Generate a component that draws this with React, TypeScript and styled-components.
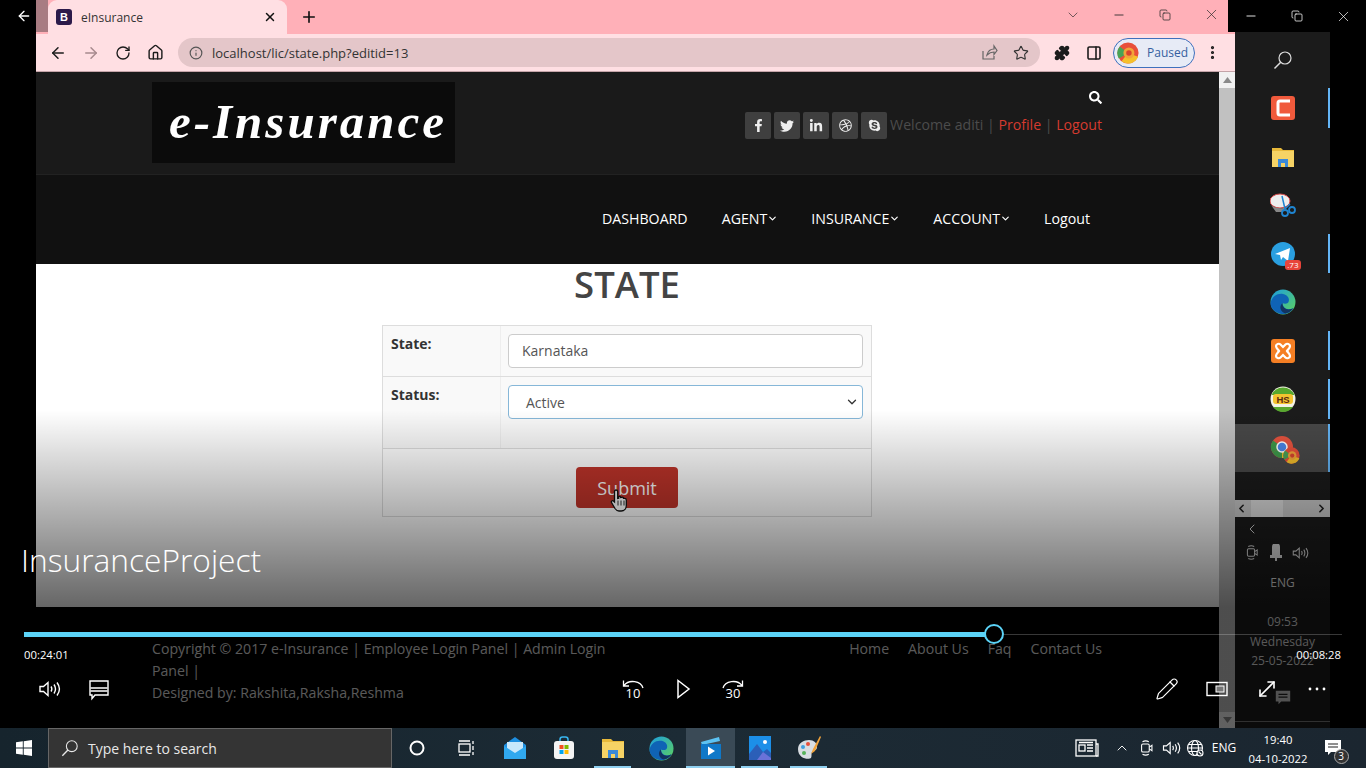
import React from 'react'
import styled, { createGlobalStyle } from 'styled-components'
import {
  ArrowLeft,
  ArrowRight,
  ChevronDown,
  ChevronLeft,
  ChevronRight,
  ChevronUp,
  Copy,
  House,
  Info,
  Minus,
  MoreVertical,
  MoveDiagonal,
  PanelRight,
  Pencil,
  Plus,
  Puzzle,
  RotateCw,
  Star,
  X
} from 'lucide-react'
import { FaDribbble, FaFacebookF, FaLinkedinIn, FaSearch, FaSkype, FaTwitter } from 'react-icons/fa'

const GlobalStyle = createGlobalStyle`
  html, body {
    margin: 0;
    background: #000;
    overflow: hidden;
  }
  * {
    box-sizing: border-box;
  }
  svg {
    flex: none;
    display: block;
  }
`

const Screen = styled.div`
  width: 1366px;
  height: 768px;
  display: flex;
  flex-direction: column;
  font-family: 'Open Sans', 'Liberation Sans', sans-serif;
  overflow: hidden;
`

const Desktop = styled.div`
  position: relative;
  height: 728px;
  display: grid;
  grid-template-columns: 36px 1199px 131px;
  background: #000;
`

const LeftStrip = styled.div`
  background: #000;
  color: #fff;
  padding: 8px 0 0 16px;
`

const Browser = styled.div`
  display: flex;
  flex-direction: column;
  min-width: 0;
`

const TitleBar = styled.div`
  height: 34px;
  display: flex;
  align-items: flex-start;
  background: #ffb0b8;
`

const TabEdge = styled.div`
  width: 12px;
  height: 32px;
  background: #a87c82;
`

const Tab = styled.div`
  width: 239px;
  height: 34px;
  display: flex;
  align-items: center;
  padding: 0 10px 0 8px;
  background: #ffdfe3;
  border-radius: 9px 9px 0 0;
  color: #333;
  font-size: 12px;
`

const Favicon = styled.div`
  width: 16px;
  height: 16px;
  margin-right: 9px;
  border-radius: 3px;
  background: #2c1a4a;
  color: #fff;
  font: bold 11px/16px 'Liberation Sans', sans-serif;
  text-align: center;
`

const TabTitle = styled.span`
  flex: 1;
`

const NewTab = styled.div`
  width: 44px;
  height: 34px;
  display: flex;
  align-items: center;
  justify-content: center;
  color: #111;
`

const WindowButtons = styled.div`
  margin-left: auto;
  margin-right: 1px;
  display: flex;
  height: 29px;
  align-items: center;
  color: #2a2a2a;
`

const WindowButton = styled.div`
  width: 46px;
  display: flex;
  justify-content: center;
`

const Toolbar = styled.div`
  height: 38px;
  display: flex;
  align-items: center;
  padding-left: 6px;
  background: #ffdfe3;
  border-bottom: 1px solid #c4a4a8;
`

const NavButton = styled.div<{ $muted?: boolean }>`
  width: 32.5px;
  display: flex;
  justify-content: center;
  color: ${(p) => (p.$muted ? '#a78a8e' : '#1c1c1c')};
`

const Omnibox = styled.div`
  width: 862px;
  height: 29px;
  margin-left: 6px;
  display: flex;
  align-items: center;
  padding: 0 3px 0 11px;
  background: #e4c6c9;
  border-radius: 15px;
  color: #333;
  font-size: 13px;
`

const Url = styled.span`
  margin-left: 9px;
  flex: 1;
`

const OmniIcon = styled.div`
  width: 32px;
  display: flex;
  justify-content: center;
  color: #555;
`

const ExtensionGroup = styled.div`
  display: flex;
  align-items: center;
  margin-left: 6px;
`

const ExtensionButton = styled.div`
  width: 32px;
  display: flex;
  justify-content: center;
  color: #1c1c1c;
`

const ProfilePill = styled.div`
  width: 82px;
  height: 30px;
  margin: 0 1px 0 3px;
  display: flex;
  align-items: center;
  gap: 8px;
  padding-left: 3px;
  border: 1.5px solid #3f70bd;
  border-radius: 15px;
  background: #e7ebf6;
  color: #36609f;
  font-size: 12px;
`

const PageRow = styled.div`
  flex: 1;
  display: flex;
  min-height: 0;
`

const Page = styled.div`
  width: 1183px;
  display: flex;
  flex-direction: column;
  background: #000;
`

const Scrollbar = styled.div`
  width: 16px;
  display: flex;
  flex-direction: column;
  align-items: center;
  background: #f1f1f1;
  color: #8a8a8a;
`

const ScrollArrow = styled.div`
  height: 16px;
  display: flex;
  align-items: center;
  justify-content: center;
`

const ScrollThumb = styled.div`
  flex: 1;
  width: 100%;
  background: #c1c1c1;
`

const HeaderBand = styled.header`
  height: 103px;
  display: flex;
  justify-content: space-between;
  padding: 10px 117px 0 116px;
  background: #1a1a1a;
  border-bottom: 1px solid #222;
`

const Logo = styled.div`
  width: 303px;
  height: 81px;
  display: flex;
  align-items: center;
  justify-content: flex-end;
  padding: 0 8px 2px 0;
  background: #0b0b0b;
  color: #fff;
  font: italic bold 49px/1 'Liberation Serif', serif;
  letter-spacing: 3px;
`

const HeaderRight = styled.div`
  display: flex;
  flex-direction: column;
  align-items: flex-end;
  padding-top: 9px;
  gap: 8px;
  color: #fff;
`

const WelcomeRow = styled.div`
  display: flex;
  align-items: center;
  gap: 3px;
  font-size: 14.15px;
  color: #4c4c4c;
`

const SocialButton = styled.a`
  width: 26px;
  height: 27px;
  display: flex;
  align-items: center;
  justify-content: center;
  border-radius: 2px;
  background: #3f3f3f;
  color: #eee;
`

const WelcomeText = styled.span`
  padding-bottom: 2px;
  white-space: pre;
`

const RedLink = styled.span`
  color: #d63a2f;
`

const NavBand = styled.nav`
  height: 89px;
  display: flex;
  justify-content: flex-end;
  align-items: center;
  gap: 33px;
  padding: 0 129px 2px 0;
  background: #111;
  color: #fff;
  font-size: 14.2px;
`

const NavItem = styled.span<{ $wide?: boolean }>`
  display: flex;
  align-items: center;
  margin-right: ${(p) => (p.$wide ? '1px' : '0')};
`

const Content = styled.main`
  height: 343px;
  display: flex;
  flex-direction: column;
  align-items: center;
  padding-right: 1px;
  background: #fff;
`

const Heading = styled.h1`
  margin: 0;
  height: 61px;
  font-size: 36.5px;
  line-height: 40px;
  font-weight: 600;
  color: #444;
`

const FormTable = styled.div`
  width: 490px;
  height: 192px;
  display: grid;
  grid-template-rows: 51px 72px 1fr;
  border: 1px solid #ddd;
  color: #333;
  font-size: 14px;
`

const FormRow = styled.div`
  display: grid;
  grid-template-columns: 118px 1fr;
  border-bottom: 1px solid #ddd;
`

const LabelCell = styled.div`
  padding: 8px 8px;
  background: #f9f9f9;
  border-right: 1px solid #eee;
  font-weight: 700;
  line-height: 20px;
`

const FieldCell = styled.div`
  padding: 8px 8px 0 7px;
  background: #f9f9f9;
`

const Field = styled.div<{ $focus?: boolean }>`
  height: 34px;
  display: flex;
  align-items: center;
  justify-content: space-between;
  padding: 0 3px ${(p) => (p.$focus ? '0' : '2px')} ${(p) => (p.$focus ? '17px' : '13px')};
  background: #fff;
  border: 1px solid ${(p) => (p.$focus ? '#86b7d8' : '#ccc')};
  border-radius: 4px;
  color: #555;
`

const SubmitRow = styled.div`
  position: relative;
  display: flex;
  justify-content: center;
  padding-top: 18px;
`

const SubmitButton = styled.button`
  width: 102px;
  height: 41px;
  border: 0;
  border-radius: 4px;
  background: #c0342a;
  color: #fff;
  font: 18px 'Open Sans', sans-serif;
`

const HandCursor = styled.svg`
  position: absolute;
  left: 227px;
  top: 39px;
`

const Footer = styled.footer`
  flex: 1;
  display: flex;
  justify-content: space-between;
  padding: 31px 117px 0 116px;
  background: #000;
  color: #dedede;
  font-size: 14.15px;
  line-height: 22px;
`

const FooterLeft = styled.div`
  width: 470px;
`

const FooterLinks = styled.div`
  display: flex;
  gap: 19px;
`

const RightColumn = styled.div`
  display: flex;
  flex-direction: column;
`

const OuterButtons = styled.div`
  height: 32px;
  margin-left: -7px;
  display: flex;
  color: #fff;
  background: #000;
`

const OuterButton = styled.div`
  width: 46px;
  flex: none;
  height: 32px;
  display: flex;
  align-items: center;
  justify-content: center;
`

const SidePanel = styled.aside`
  flex: 1;
  width: 95px;
  display: flex;
  flex-direction: column;
  align-items: center;
  padding-top: 3.5px;
  background: #1b1b1b;
  color: #ddd;
`

const AppRow = styled.div<{ $open?: boolean; $active?: boolean }>`
  position: relative;
  width: 100%;
  height: 48.5px;
  flex: none;
  display: flex;
  align-items: center;
  justify-content: center;
  background: ${(p) => (p.$active ? '#484848' : 'transparent')};

  &::after {
    content: '';
    display: ${(p) => (p.$open ? 'block' : 'none')};
    position: absolute;
    right: 0;
    top: ${(p) => (p.$active ? '0' : '4px')};
    bottom: ${(p) => (p.$active ? '0' : '5px')};
    width: 2px;
    background: #64b5f6;
  }
`

const AppIcon = styled.div`
  position: relative;
  width: 26px;
  height: 26px;
`

const CountBadge = styled.span`
  position: absolute;
  right: -5px;
  bottom: -3px;
  padding: 0 2px;
  border-radius: 3px;
  background: #e8443a;
  color: #fff;
  font-size: 8px;
  line-height: 10px;
`

const ProfileOverlay = styled.div`
  position: absolute;
  right: -4px;
  bottom: -3px;
`

const HScroll = styled.div`
  width: 100%;
  height: 17px;
  margin-top: 27.5px;
  display: flex;
  align-items: center;
  justify-content: space-between;
  padding-right: 2px;
  background: #c8c8c8;
  color: #222;
`

const HThumb = styled.div`
  width: 32px;
  height: 100%;
  margin-right: 30px;
  background: #dcdcdc;
`

const TrayBack = styled.div`
  width: 100%;
  margin-top: 4px;
  padding-left: 9px;
  color: #fff;
`

const TrayIcons = styled.div`
  margin: 7px 12px 0 0;
  display: flex;
  align-items: center;
  gap: 8px;
  color: #ddd;
`

const TrayText = styled.div<{ $top: number; $size?: number }>`
  margin-top: ${(p) => p.$top}px;
  font-size: ${(p) => p.$size ?? 12}px;
  line-height: 16px;
  white-space: nowrap;
  color: #ddd;
`

const NotifyGlyph = styled.div`
  margin-top: 20px;
  color: #ccc;
`

const PanelRule = styled.div`
  width: 100%;
  height: 1px;
  margin-top: 14px;
  background: #777;
`

const Dimmer = styled.div`
  position: absolute;
  inset: 0;
  pointer-events: none;
  background: linear-gradient(to bottom, transparent 410px, rgba(0, 0, 0, 0.6) 607px);
`

const VideoTitle = styled.div`
  position: absolute;
  left: 21px;
  top: 537px;
  color: #fff;
  font-size: 31.7px;
  font-weight: 300;
  line-height: 46px;
`

const Player = styled.div`
  position: absolute;
  left: 24px;
  right: 24px;
  top: 623px;
  color: #fff;
`

const Track = styled.div`
  height: 22px;
  display: flex;
  align-items: center;
`

const TrackFill = styled.div`
  height: 5px;
  background: #5bd3f7;
`

const TrackKnob = styled.div`
  width: 20px;
  height: 20px;
  flex: none;
  margin-left: -1px;
  border: 2px solid #5bd3f7;
  border-radius: 50%;
  background: #000;
`

const TrackRest = styled.div`
  flex: 1;
  height: 1px;
  background: rgba(255, 255, 255, 0.22);
`

const TimeRow = styled.div`
  height: 16px;
  margin-top: 2px;
  display: flex;
  justify-content: space-between;
  padding-right: 1px;
  font-size: 11.3px;
  line-height: 16px;
`

const ControlRow = styled.div`
  height: 40px;
  margin-top: 6px;
  display: flex;
  align-items: center;
`

const ControlSide = styled.div<{ $end?: boolean }>`
  flex: 1 1 0;
  display: flex;
  align-items: center;
  justify-content: ${(p) => (p.$end ? 'flex-end' : 'flex-start')};
  gap: 26px;
  padding: 0 13px;
`

const ControlCenter = styled.div`
  display: flex;
  align-items: center;
  gap: 26px;
`

const SeekLabel = styled.text`
  font: 13px 'Open Sans', sans-serif;
  fill: #fff;
`

const Taskbar = styled.div`
  height: 40px;
  display: flex;
  align-items: stretch;
  background: linear-gradient(to right, #16242d, #1c2b35 50%, #1b2630);
  color: #fff;
`

const StartButton = styled.div`
  width: 48px;
  display: flex;
  align-items: center;
  justify-content: center;
`

const SearchBox = styled.div`
  width: 344px;
  display: flex;
  align-items: center;
  gap: 9px;
  padding-left: 12px;
  background: #343434;
  border: 1px solid #666;
  font-size: 14px;
  color: #e8e8e8;
`

const TaskItem = styled.div<{ $active?: boolean; $running?: boolean }>`
  position: relative;
  width: 49px;
  display: flex;
  align-items: center;
  justify-content: center;
  background: ${(p) => (p.$active ? '#3a4a56' : 'transparent')};

  &::after {
    content: '';
    display: ${(p) => (p.$running ? 'block' : 'none')};
    position: absolute;
    left: ${(p) => (p.$active ? '0' : '6px')};
    right: ${(p) => (p.$active ? '0' : '6px')};
    bottom: 0;
    height: 2px;
    background: #8fd0f0;
  }
`

const Tray = styled.div`
  margin-left: auto;
  display: flex;
  align-items: center;
  padding-right: 12px;
`

const TrayCell = styled.div<{ $w: number }>`
  width: ${(p) => p.$w}px;
  display: flex;
  flex-direction: column;
  align-items: center;
  justify-content: center;
  font-size: 12px;
  line-height: 20px;
  white-space: nowrap;
`

const ClockCell = styled(TrayCell)`
  padding-top: 2px;
  font-size: 11.3px;
  line-height: 19px;
`

const NotifyWrap = styled.div`
  position: relative;
`

const NotifyCount = styled.span`
  position: absolute;
  right: -6px;
  bottom: -6px;
  width: 15px;
  height: 15px;
  border: 1px solid #aaa;
  border-radius: 50%;
  background: #333;
  font-size: 10px;
  line-height: 13px;
  text-align: center;
`

const ChromeMark = ({ size = 24 }: { size?: number }) => (
  <svg width={size} height={size} viewBox="0 0 24 24">
    <circle cx="12" cy="12" r="11" fill="#e8543f" />
    <path d="M12 12 2.5 17.5A11 11 0 0 1 3 5.5Z" fill="#3d9a4b" />
    <path d="M12 12 12 23A11 11 0 0 1 2.5 17.5Z" fill="#3d9a4b" />
    <path d="M12 12 21.5 17.5A11 11 0 0 1 12 23Z" fill="#f2c230" />
    <circle cx="12" cy="12" r="5" fill="#4a86e8" stroke="#fff" strokeWidth="1.5" />
  </svg>
)

const ProfileMark = ({ size = 22 }: { size?: number }) => (
  <svg width={size} height={size} viewBox="0 0 24 24">
    <circle cx="12" cy="12" r="11.5" fill="#e84f3a" />
    <path d="M12 12 2 18A11.5 11.5 0 0 1 3 5Z" fill="#49a357" />
    <path d="M12 12 23 16A11.5 11.5 0 0 1 5 21Z" fill="#f5c02c" />
    <circle cx="13" cy="12" r="6" fill="#f2a33a" />
    <circle cx="13" cy="12" r="3" fill="#d9442f" />
  </svg>
)

const EdgeMark = ({ size = 26 }: { size?: number }) => (
  <svg width={size} height={size} viewBox="0 0 26 26">
    <defs>
      <linearGradient id="edgeTop" x1="0" y1="0" x2="1" y2="1">
        <stop offset="0" stopColor="#1b9de2" />
        <stop offset="1" stopColor="#5fd35a" />
      </linearGradient>
    </defs>
    <circle cx="13" cy="13" r="12.5" fill="url(#edgeTop)" />
    <path d="M.6 14C2 7 8 4 13 5c5 1 7 5 5.5 8-1 2-4 2-6 1 0 5 5 8 11 5-3 5-8 6.500-12 6C5 24 .3 19 .6 14Z" fill="#0f63b5" />
    <path d="M12.500 14c-.5 5 5 8.500 11 5-2 3-5 5-8 5.500-5-1.500-7-7-3-10.500Z" fill="#12335f" />
  </svg>
)

const FolderMark = ({ size = 24 }: { size?: number }) => (
  <svg width={size} height={size} viewBox="0 0 24 24">
    <path d="M1 3h9l2 2h11v17H1Z" fill="#e8b93a" />
    <rect x="1" y="6" width="22" height="16" fill="#f6d365" />
    <path d="M7 22v-8h10v8h-3v-4h-4v4Z" fill="#3b8ad9" />
  </svg>
)

const SnipMark = () => (
  <svg width="26" height="26" viewBox="0 0 26 26">
    <ellipse cx="10" cy="9" rx="10" ry="7" fill="#eee" stroke="#d94a4a" strokeWidth="1" />
    <path d="M1 13c4 4 12 4 15 2l-4 5H6Z" fill="#888" />
    <path d="M12 4l3 13M15 17l5-5" stroke="#1f84d0" strokeWidth="1.500" fill="none" />
    <circle cx="15" cy="21" r="3" fill="none" stroke="#1f84d0" strokeWidth="1.800" />
    <circle cx="22" cy="18" r="3" fill="none" stroke="#1f84d0" strokeWidth="1.800" />
  </svg>
)

const XamppMark = () => (
  <svg width="26" height="26" viewBox="0 0 26 26">
    <rect x="1" y="1" width="24" height="24" rx="3" fill="#f57f24" />
    <path
      d="M6 8c0-2 3-3 4.500-1.500L13 9l2.500-2.500C17 5 20 6 20 8c0 2-1.500 3-3 5 1.500 2 3 3 3 5 0 2-3 3-4.500 1.500L13 17l-2.500 2.500C9 21 6 20 6 18c0-2 1.500-3 3-5-1.500-2-3-3-3-5Z"
      fill="none"
      stroke="#fff"
      strokeWidth="2.200"
    />
  </svg>
)

const HeidiMark = () => (
  <svg width="26" height="26" viewBox="0 0 26 26">
    <circle cx="13" cy="13" r="12.500" fill="#f2f2e4" />
    <path d="M1.500 9A12.500 12.500 0 0 1 24.500 9Z" fill="#58a82e" />
    <path d="M3 21a12.500 12.500 0 0 0 20 0Z" fill="#58a82e" />
    <rect x="3" y="8" width="20" height="10" rx="3" fill="#f4c430" />
    <text x="13" y="16.500" textAnchor="middle" fontFamily="Liberation Sans" fontWeight="700" fontSize="9.500" fill="#5a2a10">
      HS
    </text>
  </svg>
)

const LensGlyph = ({ size = 20 }: { size?: number }) => (
  <svg width={size} height={size} viewBox="0 0 20 20" fill="none" stroke="currentColor" strokeWidth="1.200">
    <circle cx="12" cy="8" r="6" />
    <path d="M7.700 12.300 1.500 18.500" strokeWidth="1.500" />
  </svg>
)

const SpeakerGlyph = ({ size = 24 }: { size?: number }) => (
  <svg width={size} height={size} viewBox="0 0 24 24" fill="none" stroke="currentColor" strokeWidth="1.400">
    <path d="M3 9.500h3.500L11 5.500v13l-4.500-4H3Z" />
    <path d="M14 9.500c1 1.500 1 3.500 0 5M17 7.500c2 3 2 6 0 9M20 5.500c3 4 3 9 0 13" />
  </svg>
)

const MeetGlyph = ({ size = 20 }: { size?: number }) => (
  <svg width={size} height={size} viewBox="0 0 20 20" fill="none" stroke="currentColor" strokeWidth="1.200">
    <rect x="4" y="5.500" width="8.500" height="9" rx="1.500" />
    <path d="M12.500 9l3-2v6l-3-2M5 3c2-1 5-1 7 0M5 17c2 1 5 1 7 0" />
  </svg>
)

const SeekGlyph = ({ label, mirror }: { label: string; mirror?: boolean }) => (
  <svg width="24" height="30" viewBox="0 -3 24 30" fill="none">
    <path
      d={mirror ? 'M2 11C4 4 16 2 21 8.500M21.500 3.500V9H16' : 'M22 11C20 4 8 2 3 8.500M2.500 3.500V9H8'}
      stroke="#fff"
      strokeWidth="1.300"
    />
    <SeekLabel x="12" y="21" textAnchor="middle">
      {label}
    </SeekLabel>
  </svg>
)

const CaptionGlyph = () => (
  <svg width="24" height="24" viewBox="0 0 24 24" fill="none" stroke="#fff" strokeWidth="1.400">
    <path d="M3 4h18v14H8l-3 3.500V18H3Z" />
    <path d="M3.500 11h17M3.500 14h17" />
  </svg>
)

const PlayGlyph = () => (
  <svg width="24" height="24" viewBox="0 0 24 24" fill="none" stroke="#fff" strokeWidth="1.500">
    <path d="M7 3.500 18 12 7 20.500Z" />
  </svg>
)

const MiniGlyph = () => (
  <svg width="24" height="24" viewBox="0 0 24 24" fill="none" stroke="#fff" strokeWidth="1.400">
    <rect x="2" y="5.500" width="20" height="13" />
    <rect x="11" y="9" width="8" height="6" fill="#777" strokeWidth="1" />
  </svg>
)

const NotesGlyph = ({ size = 20 }: { size?: number }) => (
  <svg width={size} height={size} viewBox="0 0 20 20" fill="currentColor">
    <path d="M2 2h16v12H8l-3 3v-3H2Z" />
    <path d="M5 6h10M5 9h10" stroke="#222" strokeWidth="1.200" />
  </svg>
)

const StartGlyph = () => (
  <svg width="16" height="16" viewBox="0 0 16 16" fill="#fff">
    <path d="M0 2.300 6.800 1.300V7.500H0ZM7.700 1.200 16 0V7.500H7.700ZM0 8.400H6.800V14.700L0 13.700ZM7.700 8.400H16V16L7.700 14.800Z" />
  </svg>
)

const TaskViewGlyph = () => (
  <svg width="20" height="20" viewBox="0 0 20 20" fill="none" stroke="#fff" strokeWidth="1.300">
    <rect x="3" y="6" width="11" height="8" />
    <path d="M3 3h11M3 17h11M17 3v3M17 8v4M17 14v3" />
  </svg>
)

const MailGlyph = () => (
  <svg width="24" height="24" viewBox="0 0 24 24">
    <path d="M12 1 23 9v14H1V9Z" fill="#1f8fe0" />
    <path d="M4 6h16v8l-8 4-8-4Z" fill="#c9e8fb" />
    <path d="M1 10l11 7 11-7v13H1Z" fill="#30a8ef" />
  </svg>
)

const StoreGlyph = () => (
  <svg width="24" height="24" viewBox="0 0 24 24">
    <path d="M8 6V3.500C8 2 9 1 10.500 1h3C15 1 16 2 16 3.500V6" fill="none" stroke="#38b6f0" strokeWidth="1.500" />
    <rect x="2" y="5" width="20" height="18" rx="3" fill="#f4f4f4" />
    <rect x="7.500" y="9" width="4" height="4" fill="#f25022" />
    <rect x="12.500" y="9" width="4" height="4" fill="#7fba00" />
    <rect x="7.500" y="14" width="4" height="4" fill="#00a4ef" />
    <rect x="12.500" y="14" width="4" height="4" fill="#ffb900" />
  </svg>
)

const VideoGlyph = () => (
  <svg width="24" height="24" viewBox="0 0 24 24">
    <path d="M2 6 20 1l1 4L3 9Z" fill="#5cc2f2" />
    <rect x="2" y="8" width="20" height="15" fill="#0f78c8" />
    <path d="M9 10.500v9l7-4.500Z" fill="#fff" />
  </svg>
)

const PhotosGlyph = () => (
  <svg width="24" height="26" viewBox="0 0 24 26">
    <rect x="1" y="1" width="22" height="24" fill="#1c8fe8" />
    <circle cx="17" cy="7" r="2" fill="#fff" />
    <path d="M1 19 9 9l6 8 4-3 4 4v7H1Z" fill="#2b5fb8" />
    <path d="M9 25 15 17l8 6v2Z" fill="#6a72d8" />
  </svg>
)

const PaletteGlyph = () => (
  <svg width="26" height="26" viewBox="0 0 26 26">
    <path d="M2 14C2 8 8 5 13 5c5 0 8 3 8 7s-4 3-5 5 0 4-1 6c-2 2-13 1-13-9Z" fill="#d8dde2" />
    <circle cx="7" cy="12" r="2" fill="#3fa0e0" />
    <circle cx="12" cy="9" r="2" fill="#e84f3a" />
    <circle cx="8" cy="18" r="2" fill="#56b35a" />
    <path d="M24 1l-7 13-2 5 4-3 6-14Z" fill="#f2a33a" />
  </svg>
)

const NewsGlyph = () => (
  <svg width="24" height="20" viewBox="0 0 24 20" fill="none" stroke="#fff" strokeWidth="1.300">
    <rect x="1" y="2" width="20" height="16" />
    <rect x="4" y="7" width="6" height="6" />
    <path d="M12 7h6M12 10h6M12 13h6M4 4.500h14M21 6h2v12h-2" />
  </svg>
)

const GlobeGlyph = () => (
  <svg width="18" height="18" viewBox="0 0 18 18" fill="none" stroke="#fff" strokeWidth="1.100">
    <circle cx="9" cy="9" r="7.500" />
    <ellipse cx="9" cy="9" rx="3.500" ry="7.500" />
    <path d="M1.500 9h15M2.500 5.500h13M2.500 12.500h13" />
    <circle cx="14" cy="14" r="3" fill="#1b2630" />
    <path d="M12.500 12.500l3 3" />
  </svg>
)

const HandGlyph = () => (
  <HandCursor width="20" height="25" viewBox="0 0 20 24">
    <path
      d="M6 1.500c1 0 1.700.7 1.700 1.700V10l1-.2V8c1-.5 2 0 2 1l1-.2c1-.3 1.800.2 1.800 1l1 0c1 0 1.800.6 1.800 1.800V17c0 3-2 5.500-5 5.500H9c-2 0-3-1-4-2.500L1.500 14c-.7-1.200 1-2.500 2-1.500l1 1V3.200C4.500 2.200 5 1.500 6 1.500Z"
      fill="#fff"
      stroke="#111"
      strokeWidth="1.300"
    />
    <path d="M8 12v5M11 12v5M14 12v5" stroke="#111" strokeWidth=".9" />
  </HandCursor>
)

const TriangleUp = () => (
  <svg width="9" height="6" viewBox="0 0 9 6" fill="currentColor">
    <path d="M4.500 0 9 6H0Z" />
  </svg>
)

const TriangleDown = () => (
  <svg width="9" height="6" viewBox="0 0 9 6" fill="currentColor">
    <path d="M4.500 6 9 0H0Z" />
  </svg>
)

export default function App() {
  return (
    <>
      <GlobalStyle />
      <Screen>
        <Desktop>
          <LeftStrip>
            <ArrowLeft size={16} />
          </LeftStrip>

          <Browser>
            <TitleBar>
              <TabEdge />
              <Tab>
                <Favicon>B</Favicon>
                <TabTitle>eInsurance</TabTitle>
                <X size={14} strokeWidth={2.5} color="#111" />
              </Tab>
              <NewTab>
                <Plus size={18} strokeWidth={2.2} />
              </NewTab>
              <WindowButtons>
                <WindowButton>
                  <ChevronDown size={16} strokeWidth={1} />
                </WindowButton>
                <WindowButton>
                  <Minus size={14} strokeWidth={1.5} />
                </WindowButton>
                <WindowButton>
                  <Copy size={12} strokeWidth={1.5} />
                </WindowButton>
                <WindowButton>
                  <X size={17} strokeWidth={1} />
                </WindowButton>
              </WindowButtons>
            </TitleBar>

            <Toolbar>
              <NavButton>
                <ArrowLeft size={18} strokeWidth={2} />
              </NavButton>
              <NavButton $muted>
                <ArrowRight size={18} strokeWidth={2} />
              </NavButton>
              <NavButton>
                <RotateCw size={16} strokeWidth={2} />
              </NavButton>
              <NavButton>
                <House size={17} strokeWidth={2} />
              </NavButton>
              <Omnibox>
                <Info size={14} color="#555" />
                <Url>localhost/lic/state.php?editid=13</Url>
                <OmniIcon>
                  <svg width="17" height="17" viewBox="0 0 17 17" fill="none" stroke="#666" strokeWidth="1.200">
                    <path d="M2 7v8h11v-3M6 11c1-4 4-6 7-6V2l3 4.500-3 4V8c-3 0-5 1-7 3Z" />
                  </svg>
                </OmniIcon>
                <OmniIcon>
                  <Star size={16} strokeWidth={1.7} color="#333" />
                </OmniIcon>
              </Omnibox>
              <ExtensionGroup>
                <ExtensionButton>
                  <Puzzle size={16} fill="#1c1c1c" />
                </ExtensionButton>
                <ExtensionButton>
                  <PanelRight size={16} strokeWidth={2.4} />
                </ExtensionButton>
                <ProfilePill>
                  <ProfileMark />
                  Paused
                </ProfilePill>
                <ExtensionButton>
                  <MoreVertical size={17} strokeWidth={2.5} />
                </ExtensionButton>
              </ExtensionGroup>
            </Toolbar>

            <PageRow>
              <Page>
                <HeaderBand>
                  <Logo>e-Insurance</Logo>
                  <HeaderRight>
                    <FaSearch size={13} />
                    <WelcomeRow>
                      <SocialButton>
                        <FaFacebookF size={13} />
                      </SocialButton>
                      <SocialButton>
                        <FaTwitter size={14} />
                      </SocialButton>
                      <SocialButton>
                        <FaLinkedinIn size={14} />
                      </SocialButton>
                      <SocialButton>
                        <FaDribbble size={13} />
                      </SocialButton>
                      <SocialButton>
                        <FaSkype size={13} />
                      </SocialButton>
                      <WelcomeText>
                        Welcome aditi | <RedLink>Profile</RedLink> | <RedLink>Logout</RedLink>
                      </WelcomeText>
                    </WelcomeRow>
                  </HeaderRight>
                </HeaderBand>

                <NavBand>
                  <NavItem $wide>DASHBOARD</NavItem>
                  <NavItem>
                    AGENT
                    <ChevronDown size={11} strokeWidth={2.6} />
                  </NavItem>
                  <NavItem>
                    INSURANCE
                    <ChevronDown size={11} strokeWidth={2.6} />
                  </NavItem>
                  <NavItem>
                    ACCOUNT
                    <ChevronDown size={11} strokeWidth={2.6} />
                  </NavItem>
                  <NavItem>Logout</NavItem>
                </NavBand>

                <Content>
                  <Heading>STATE</Heading>
                  <FormTable>
                    <FormRow>
                      <LabelCell>State:</LabelCell>
                      <FieldCell>
                        <Field>Karnataka</Field>
                      </FieldCell>
                    </FormRow>
                    <FormRow>
                      <LabelCell>Status:</LabelCell>
                      <FieldCell>
                        <Field $focus>
                          Active
                          <ChevronDown size={14} strokeWidth={2.2} color="#333" />
                        </Field>
                      </FieldCell>
                    </FormRow>
                    <SubmitRow>
                      <SubmitButton>Submit</SubmitButton>
                      <HandGlyph />
                    </SubmitRow>
                  </FormTable>
                </Content>

                <Footer>
                  <FooterLeft>
                    Copyright © 2017 e-Insurance | Employee Login Panel | Admin Login Panel |
                    <br />
                    Designed by: Rakshita,Raksha,Reshma
                  </FooterLeft>
                  <FooterLinks>
                    <span>Home</span>
                    <span>About Us</span>
                    <span>Faq</span>
                    <span>Contact Us</span>
                  </FooterLinks>
                </Footer>
              </Page>

              <Scrollbar>
                <ScrollArrow>
                  <TriangleUp />
                </ScrollArrow>
                <ScrollThumb />
                <ScrollArrow>
                  <TriangleDown />
                </ScrollArrow>
              </Scrollbar>
            </PageRow>
          </Browser>

          <RightColumn>
            <OuterButtons>
              <OuterButton>
                <Minus size={14} strokeWidth={1.5} />
              </OuterButton>
              <OuterButton>
                <Copy size={12} strokeWidth={1.5} />
              </OuterButton>
              <OuterButton>
                <X size={17} strokeWidth={1} />
              </OuterButton>
            </OuterButtons>
            <SidePanel>
              <AppRow>
                <LensGlyph />
              </AppRow>
              <AppRow $open>
                <AppIcon>
                  <svg width="26" height="26" viewBox="0 0 26 26">
                    <rect x="1" y="1" width="24" height="24" rx="3" fill="#f05a3c" />
                    <path d="M20 6H10Q8 6 8 8v10q0 2 2 2h10" fill="none" stroke="#fff" strokeWidth="3" />
                  </svg>
                </AppIcon>
              </AppRow>
              <AppRow>
                <FolderMark />
              </AppRow>
              <AppRow>
                <SnipMark />
              </AppRow>
              <AppRow $open>
                <AppIcon>
                  <svg width="26" height="26" viewBox="0 0 26 26">
                    <circle cx="13" cy="13" r="12" fill="#2a9fe0" />
                    <path d="M5 13 20 7l-2 13-5-4-2 3-1-5Z" fill="#fff" />
                  </svg>
                  <CountBadge>.73</CountBadge>
                </AppIcon>
              </AppRow>
              <AppRow>
                <EdgeMark />
              </AppRow>
              <AppRow $open>
                <XamppMark />
              </AppRow>
              <AppRow $open>
                <HeidiMark />
              </AppRow>
              <AppRow $open $active>
                <AppIcon>
                  <ChromeMark />
                  <ProfileOverlay>
                    <ProfileMark size={17} />
                  </ProfileOverlay>
                </AppIcon>
              </AppRow>
              <HScroll>
                <ChevronLeft size={13} strokeWidth={3} />
                <HThumb />
                <ChevronRight size={13} strokeWidth={3} />
              </HScroll>
              <TrayBack>
                <ChevronLeft size={16} strokeWidth={1.2} />
              </TrayBack>
              <TrayIcons>
                <MeetGlyph size={17} />
                <svg width="14" height="18" viewBox="0 0 14 18" fill="#ddd">
                  <path d="M3 3a4 4 0 0 1 8 0v9H3Z" />
                  <path d="M1 11h12v3H8v3H6v-3H1Z" />
                </svg>
                <SpeakerGlyph size={18} />
              </TrayIcons>
              <TrayText $top={13}>ENG</TrayText>
              <TrayText $top={23}>09:53</TrayText>
              <TrayText $top={4}>Wednesday</TrayText>
              <TrayText $top={3}>25-05-2022</TrayText>
              <NotifyGlyph>
                <NotesGlyph size={18} />
              </NotifyGlyph>
              <PanelRule />
            </SidePanel>
          </RightColumn>

          <Dimmer />
          <VideoTitle>InsuranceProject</VideoTitle>

          <Player>
            <Track>
              <TrackFill style={{ width: `${(961 / 1318) * 100}%` }} />
              <TrackKnob />
              <TrackRest />
            </Track>
            <TimeRow>
              <span>00:24:01</span>
              <span>00:08:28</span>
            </TimeRow>
            <ControlRow>
              <ControlSide>
                <SpeakerGlyph />
                <CaptionGlyph />
              </ControlSide>
              <ControlCenter>
                <SeekGlyph label="10" />
                <PlayGlyph />
                <SeekGlyph label="30" mirror />
              </ControlCenter>
              <ControlSide $end>
                <Pencil size={24} strokeWidth={1.2} />
                <MiniGlyph />
                <MoveDiagonal size={24} strokeWidth={1.6} />
                <svg width="24" height="24" viewBox="0 0 24 24" fill="#fff">
                  <circle cx="5" cy="12" r="1.400" />
                  <circle cx="12" cy="12" r="1.400" />
                  <circle cx="19" cy="12" r="1.400" />
                </svg>
              </ControlSide>
            </ControlRow>
          </Player>
        </Desktop>

        <Taskbar>
          <StartButton>
            <StartGlyph />
          </StartButton>
          <SearchBox>
            <LensGlyph size={18} />
            Type here to search
          </SearchBox>
          <TaskItem>
            <svg width="16" height="16" viewBox="0 0 16 16" fill="none" stroke="#fff" strokeWidth="2">
              <circle cx="8" cy="8" r="6.500" />
            </svg>
          </TaskItem>
          <TaskItem>
            <TaskViewGlyph />
          </TaskItem>
          <TaskItem>
            <MailGlyph />
          </TaskItem>
          <TaskItem>
            <StoreGlyph />
          </TaskItem>
          <TaskItem $running>
            <FolderMark />
          </TaskItem>
          <TaskItem>
            <EdgeMark size={25} />
          </TaskItem>
          <TaskItem $active $running>
            <VideoGlyph />
          </TaskItem>
          <TaskItem $running>
            <PhotosGlyph />
          </TaskItem>
          <TaskItem $running>
            <PaletteGlyph />
          </TaskItem>
          <Tray>
            <TrayCell $w={36}>
              <NewsGlyph />
            </TrayCell>
            <TrayCell $w={34}>
              <ChevronUp size={16} strokeWidth={1.4} />
            </TrayCell>
            <TrayCell $w={16}>
              <MeetGlyph size={18} />
            </TrayCell>
            <TrayCell $w={32}>
              <SpeakerGlyph size={20} />
            </TrayCell>
            <TrayCell $w={16}>
              <GlobeGlyph />
            </TrayCell>
            <TrayCell $w={42}>ENG</TrayCell>
            <ClockCell $w={66}>
              <span>19:40</span>
              <span>04-10-2022</span>
            </ClockCell>
            <TrayCell $w={43}>
              <NotifyWrap>
                <NotesGlyph />
                <NotifyCount>3</NotifyCount>
              </NotifyWrap>
            </TrayCell>
          </Tray>
        </Taskbar>
      </Screen>
    </>
  )
}
